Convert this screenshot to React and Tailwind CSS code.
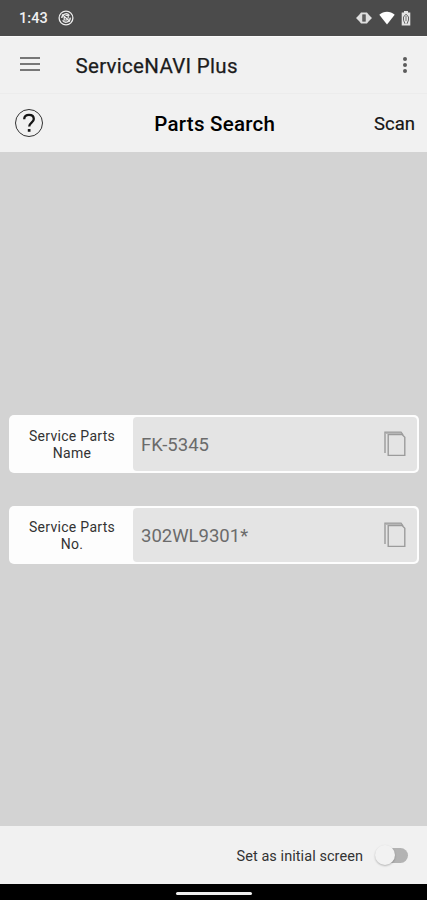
import React from 'react';

function StatusBar() {
  return (
    <div className="flex h-9 items-center justify-between bg-[#4b4b4b] pl-[19px] pr-4 text-white">
      <div className="flex items-center gap-[10px]">
        <span className="mt-0.5 text-[14.5px] leading-4 font-medium tracking-[0.1px] text-[#f0f0f0]">1:43</span>
        <svg width="16" height="16" viewBox="0 0 16 16" fill="none" stroke="#ededed">
          <circle cx="8" cy="8" r="6.9" strokeWidth="1.3" />
          <path d="M3.8 8a4.2 4.2 0 0 1 7.6-2.4M12.2 7.6a4.2 4.2 0 0 1-7.6 2.8" strokeWidth="1.4" />
          <path d="M4 4.5l8 7M6.2 7v3h3M7.5 5.5h2.7v3" strokeWidth="1.2" />
        </svg>
      </div>
      <div className="flex items-center">
        <svg className="mr-[7px]" width="16" height="12" viewBox="0 0 16 12">
          <path d="M0 6l3-3v6zM16 6l-3-3v6z" fill="#e0e0e0" />
          <path d="M3 3l2-2.4h6L13 3v6l-2 2.4H5L3 9z" fill="#dedede" />
          <rect x="6.3" y="2.4" width="3.4" height="7.2" fill="#505050" />
          <path d="M8 3.4v5.2" stroke="#777" strokeWidth="0.8" />
        </svg>
        <svg className="mr-[6px]" width="16" height="14" viewBox="0 0 16 14">
          <path d="M0.3 3.7C4.6-.3 11.4-.3 15.7 3.7L8 13.4z" fill="#fff" />
        </svg>
        <svg width="10" height="15" viewBox="0 0 10 15">
          <path d="M3 0h4v1.6h2.3V14.6H.7V1.6H3z" fill="#e4e4e4" />
          <path d="M5 3.2L2.5 6v3.2L4 12.8M5.2 3.2L7.5 6v3L6 12.8" fill="none" stroke="#666" strokeWidth="1" />
          <path d="M5 5v5" stroke="#777" strokeWidth="1" />
        </svg>
      </div>
    </div>
  );
}

function AppBar() {
  return (
    <div className="flex h-[58px] items-center border-t border-b border-t-[#fafafa] border-b-[#ececec] pl-5 pr-[19px]">
      <div className="-mt-0.5 flex w-5 flex-col gap-1">
        <div className="h-0.5 bg-[#777]" />
        <div className="h-0.5 bg-[#777]" />
        <div className="h-0.5 bg-[#777]" />
      </div>
      <h1 className="ml-[35.5px] mt-0.5 flex-1 text-[20.5px] leading-6 tracking-[0.3px] text-[#1c1c1c] [-webkit-text-stroke:0.25px_#1c1c1c]">ServiceNAVI Plus</h1>
      <svg width="6" height="18" viewBox="0 0 6 18" fill="#5c5c5c">
        <circle cx="3" cy="3" r="2" />
        <circle cx="3" cy="9" r="2" />
        <circle cx="3" cy="15" r="2" />
      </svg>
    </div>
  );
}

function ScreenHeader() {
  return (
    <div className="grid h-[58px] grid-cols-3 items-center pl-[14.5px] pr-3">
      <div className="flex size-7 items-center justify-center rounded-full border-[1.5px] border-[#333]">
        <svg width="14" height="20" viewBox="0 0 14 20" fill="none" stroke="#151515" strokeWidth="2.3">
          <path d="M2.2 6.2C2.2 3.4 4.2 1.8 7 1.8s4.8 1.5 4.8 4.1c0 3.7-4.6 3.7-4.6 7.7" />
          <path d="M5.8 17.4h2.7" strokeWidth="2.7" />
        </svg>
      </div>
      <h2 className="mt-0.5 text-center text-[20.5px] leading-6 font-medium tracking-[0.25px] whitespace-nowrap text-black">Parts Search</h2>
      <button className="mt-0.5 text-right text-[18.5px] leading-6 text-[#151515] [-webkit-text-stroke:0.2px_#151515]">Scan</button>
    </div>
  );
}

function CopyIcon() {
  return (
    <svg width="22" height="26" viewBox="0 0 22 26" fill="none" stroke="#9b9b9b" strokeWidth="1.4">
      <path d="M4.2 3.6h14l2.6 2.6v18.2H4.2z" />
      <path d="M19 4L17 1.2H1v20.8" />
      <path d="M1.5 2.2h15.5" stroke="#b0b0b0" />
    </svg>
  );
}

function PartField({ title, subtitle, value }) {
  return (
    <div className="flex h-[58px] rounded-[5px] bg-[#fdfdfd] p-0.5">
      <div className="flex w-[122px] flex-col items-center justify-center pt-[3px] text-[14px] leading-[17px] tracking-[0.3px] text-[#333]">
        <span>{title}</span>
        <span>{subtitle}</span>
      </div>
      <div className="flex flex-1 items-center justify-between rounded bg-[#e4e4e4] pl-2 pr-[11.5px]">
        <span className="mt-0.5 text-[18.5px] leading-6 text-[#6b6b6b]">{value}</span>
        <CopyIcon />
      </div>
    </div>
  );
}

export default function App() {
  return (
    <div className="flex h-[900px] w-[427px] flex-col overflow-hidden bg-[#f1f1f1] font-['Roboto',sans-serif]">
      <StatusBar />
      <AppBar />
      <ScreenHeader />
      <main className="flex flex-1 flex-col justify-center gap-[33px] bg-[#d3d3d3] pl-[9px] pr-2">
        <PartField title="Service Parts" subtitle="Name" value="FK-5345" />
        <PartField title="Service Parts" subtitle="No." value="302WL9301*" />
      </main>
      <footer className="flex h-[58px] items-center justify-end pr-[19px]">
        <span className="mr-3 mt-[3px] text-[14.5px] leading-5 tracking-[0.06px] text-[#333]">Set as initial screen</span>
        <div className="flex h-[15px] w-[33px] items-center rounded-full bg-linear-to-r from-transparent from-30% to-[#b3b3b3] to-30%">
          <div className="size-5 shrink-0 rounded-full bg-[#f2f2f2] shadow-[0_1px_2px_rgba(0,0,0,0.25)]" />
        </div>
      </footer>
      <div className="flex h-4 items-center justify-center bg-black pt-0.5">
        <div className="h-[3px] w-[76px] rounded-full bg-[#eee]" />
      </div>
    </div>
  );
}
